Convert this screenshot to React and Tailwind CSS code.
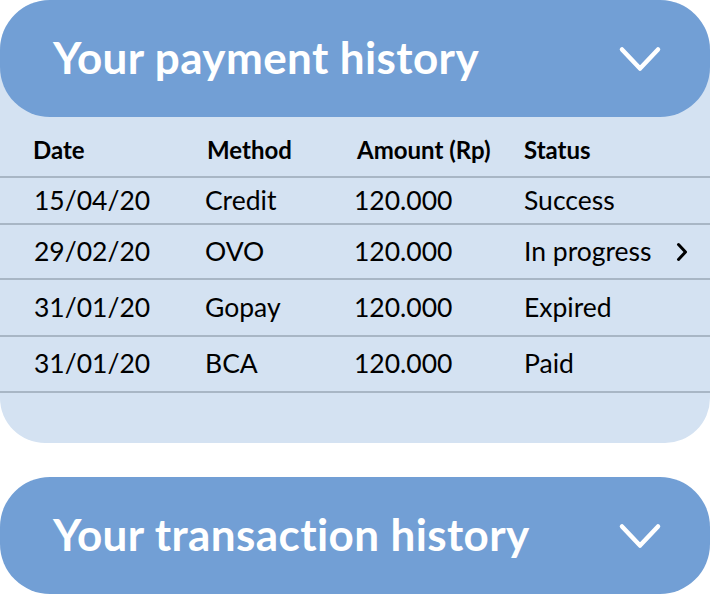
import React from 'react';

const rows = [
    { date: "15/04/20", method: "Credit", amount: "120.000", status: "Success", h: "h-[47px]" },
    { date: "29/02/20", method: "OVO", amount: "120.000", status: "In progress", h: "h-[55px]", more: true },
    { date: "31/01/20", method: "Gopay", amount: "120.000", status: "Expired", h: "h-[57px]" },
    { date: "31/01/20", method: "BCA", amount: "120.000", status: "Paid", h: "h-[56px]" },
];

const ChevronDown = () => (
    <svg width="44" height="28" viewBox="0 0 44 28" fill="none" className="shrink-0">
        <path d="M4 4.5 L22 23.5 L40 4.5" stroke="white" strokeWidth="4.5" strokeLinecap="round" strokeLinejoin="round" />
    </svg>
);

const AccordionHeader = ({ title }) => (
    <div className="h-[117px] rounded-[50px] bg-[#729fd5] flex items-center justify-between pl-[53px] pr-[48px]">
        <h2 className="text-[44px] font-bold text-white tracking-[0.4px] leading-none pb-[4px]">{title}</h2>
        <ChevronDown />
    </div>
);

export default function App() {
    return (
        <div className="w-[710px] h-[595px] bg-white flex flex-col gap-[34px] font-['Lato','Liberation_Sans',sans-serif] text-black">

            {/* Payment history (open) */}
            <section className="rounded-t-[50px] rounded-b-[45px] bg-[#d4e2f2] pb-[50px]">
                <AccordionHeader title="Your payment history" />

                <div className="grid grid-cols-[172px_149px_170px_1fr] pl-[33px] h-[61px] items-center border-b-2 border-[#a8b6c5] text-[24px] font-bold pt-[6px]">
                    <span>Date</span>
                    <span className="ml-[2px]">Method</span>
                    <span className="ml-[3px]">Amount (Rp)</span>
                    <span>Status</span>
                </div>

                {rows.map((r, i) => (
                    <div key={i} className={`grid grid-cols-[172px_149px_170px_1fr] pl-[33px] ${r.h} items-center border-b-2 border-[#a8b6c5] text-[26.5px]`}>
                        <span className="ml-[1px]">{r.date}</span>
                        <span>{r.method}</span>
                        <span>{r.amount}</span>
                        <span className="flex items-center justify-between pr-[22px]">
                            {r.status}
                            {r.more && (
                                <svg width="12" height="20" viewBox="0 0 12 20" fill="none">
                                    <path d="M2.5 2.5 L9.5 10 L2.5 17.5" stroke="black" strokeWidth="3" strokeLinecap="round" strokeLinejoin="round" />
                                </svg>
                            )}
                        </span>
                    </div>
                ))}
            </section>

            {/* Transaction history (collapsed) */}
            <AccordionHeader title="Your transaction history" />
        </div>
    );
}
